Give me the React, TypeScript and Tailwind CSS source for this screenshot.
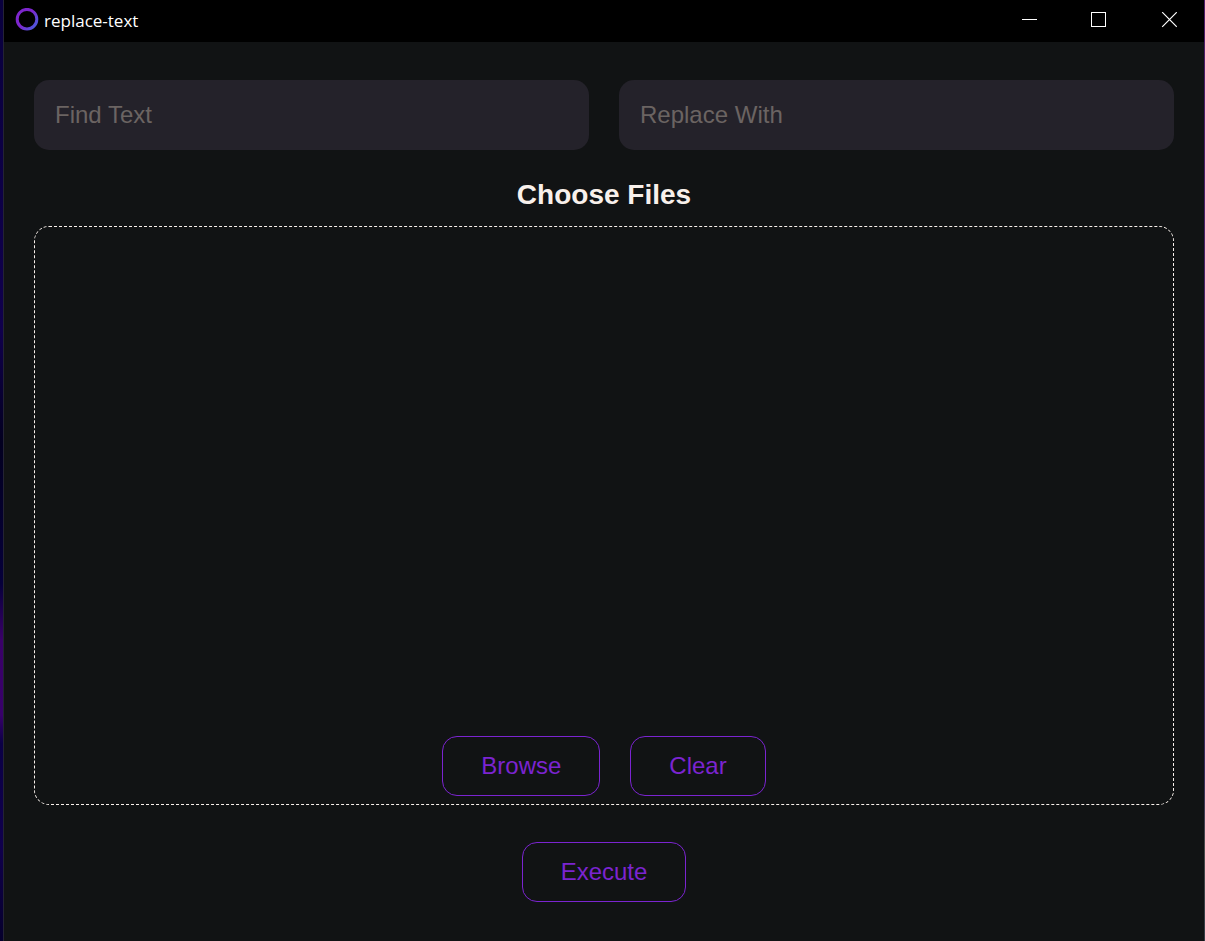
import { useState } from "react";
import type { ReactNode } from "react";

const fieldClass =
  "h-[70px] w-full min-w-0 rounded-[15px] bg-[#24222a] px-[21px] text-2xl text-[#f8f0eb] outline-none placeholder:text-[#6b6462]";

function OutlineButton({ children, onClick }: { children: ReactNode; onClick?: () => void }) {
  return (
    <button
      type="button"
      onClick={onClick}
      className="h-[60px] rounded-[15px] border border-[#7b24d0] px-[38px] text-2xl text-[#7b24d0]"
    >
      {children}
    </button>
  );
}

function TitleBar() {
  return (
    <header className="flex h-[42px] items-center justify-between bg-black pl-[11px] text-white">
      <div className="flex items-center gap-[5px] pb-[2px]">
        <svg width="24" height="24" viewBox="0 0 24 24" fill="none" aria-hidden="true">
          <defs>
            <linearGradient id="ring" x1="3" y1="3" x2="22" y2="18" gradientUnits="userSpaceOnUse">
              <stop offset="0.45" stopColor="#7d26cd" />
              <stop offset="1" stopColor="#4c5bdc" />
            </linearGradient>
          </defs>
          <circle cx="12" cy="11.200" r="9.800" stroke="url(#ring)" strokeWidth="3" />
        </svg>
        <h1 className="pt-[2px] font-['Open_Sans','Noto_Sans',sans-serif] text-[17px] leading-6">replace-text</h1>
      </div>
      <div className="flex h-full">
        <button type="button" aria-label="Minimize" className="flex w-[70px] items-center justify-center pb-[2px]">
          <svg width="16" height="16" viewBox="0 0 16 16" stroke="#fff" fill="none" shapeRendering="crispEdges">
            <path d="M1 7.500h15" />
          </svg>
        </button>
        <button type="button" aria-label="Maximize" className="flex w-[70px] items-center justify-center pb-[2px]">
          <svg width="16" height="16" viewBox="0 0 16 16" stroke="#fff" fill="none" shapeRendering="crispEdges">
            <path d="M.5 .5h14v14h-14z" />
          </svg>
        </button>
        <button type="button" aria-label="Close" className="flex w-[70px] items-center justify-center pb-[2px]">
          <svg width="16" height="16" viewBox="0 0 16 16" stroke="#fff" strokeWidth="1.2" fill="none">
            <path d="M1.200 .2l14.600 14.600M15.800 .2l-14.600 14.600" />
          </svg>
        </button>
      </div>
    </header>
  );
}

export default function App() {
  const [find, setFind] = useState("");
  const [replacement, setReplacement] = useState("");

  return (
    <div className="flex min-h-screen font-['Liberation_Sans',Arial,sans-serif]">
      <div className="w-[3px] shrink-0 bg-[linear-gradient(to_bottom,#09003d_0%,#10004c_35%,#030020_47%,#06003a_62%,#3a0068_68%,#38006a_76%,#0b0045_79%,#10004c_90%,#06002c_100%)]" />
      <div className="flex min-w-0 flex-1 flex-col border-l border-[#242333] bg-[#111314]">
        <TitleBar />
        <main className="flex flex-1 flex-col items-center px-[30px] pt-[38px] pb-[39px]">
          <div className="grid w-full grid-cols-2 gap-[30px]">
            <input
              type="text"
              aria-label="Find Text"
              placeholder="Find Text"
              value={find}
              onChange={(e) => setFind(e.target.value)}
              className={fieldClass}
            />
            <input
              type="text"
              aria-label="Replace With"
              placeholder="Replace With"
              value={replacement}
              onChange={(e) => setReplacement(e.target.value)}
              className={fieldClass}
            />
          </div>
          <h2 className="mt-[29px] mb-[15px] text-[28px] leading-8 font-bold text-[#f8f0eb]">Choose Files</h2>
          <section
            aria-label="Choose Files"
            className="flex w-full flex-1 items-end justify-center gap-[30px] rounded-[15px] border border-dashed border-[#f8f0eb] p-2"
          >
            <OutlineButton>Browse</OutlineButton>
            <OutlineButton>Clear</OutlineButton>
          </section>
          <div className="mt-[37px] flex">
            <OutlineButton>Execute</OutlineButton>
          </div>
        </main>
      </div>
      <div className="w-px shrink-0 bg-[linear-gradient(to_bottom,#4f1c68_0%,#4a2468_45%,#392b5c_82%,#4a4a4c_90%,#343b45_100%)]" />
    </div>
  );
}
